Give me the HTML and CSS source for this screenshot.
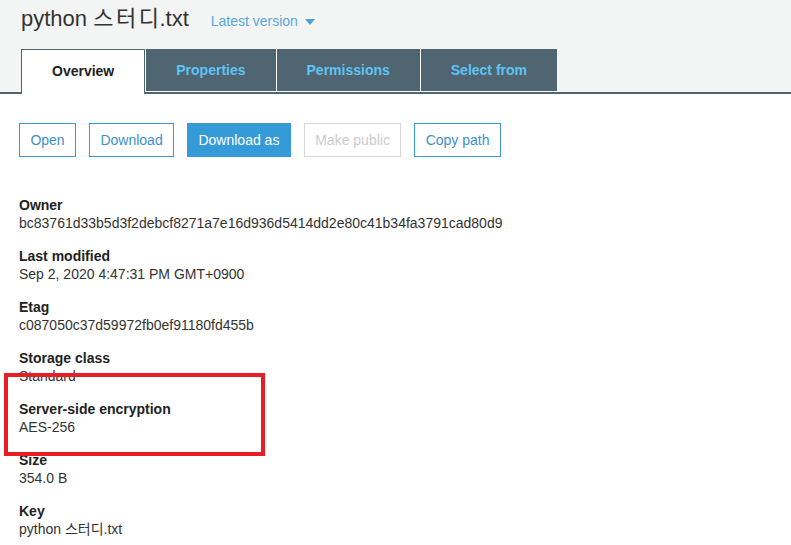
FILE: index.html
```html
<!DOCTYPE html>
<html lang="en">
<head>
<meta charset="utf-8">
<title>python 스터디.txt</title>
<link rel="stylesheet" href="styles.css">
</head>
<body>
<header class="page-head">
  <div class="title-row">
    <h1 class="file-title">python <span class="ko">스터디</span>.txt</h1>
    <a class="version" href="#">Latest version <span class="caret"></span></a>
  </div>
  <nav class="tabs">
    <a class="tab tab-active" href="#">Overview</a>
    <a class="tab" href="#">Properties</a>
    <a class="tab" href="#">Permissions</a>
    <a class="tab" href="#">Select from</a>
  </nav>
</header>
<main class="content">
  <div class="actions">
    <button class="btn">Open</button>
    <button class="btn">Download</button>
    <button class="btn btn-primary">Download as</button>
    <button class="btn btn-disabled">Make public</button>
    <button class="btn">Copy path</button>
  </div>
  <dl class="props">
    <div class="prop"><dt>Owner</dt><dd>bc83761d33b5d3f2debcf8271a7e16d936d5414dd2e80c41b34fa3791cad80d9</dd></div>
    <div class="prop"><dt>Last modified</dt><dd>Sep 2, 2020 4:47:31 PM GMT+0900</dd></div>
    <div class="prop"><dt>Etag</dt><dd>c087050c37d59972fb0ef91180fd455b</dd></div>
    <div class="prop"><dt>Storage class</dt><dd>Standard</dd></div>
    <div class="prop"><dt>Server-side encryption</dt><dd>AES-256</dd></div>
    <div class="prop"><dt>Size</dt><dd>354.0 B</dd></div>
    <div class="prop"><dt>Key</dt><dd>python 스터디.txt</dd></div>
  </dl>
</main>
<div class="highlight"></div>
</body>
</html>
```

FILE: styles.css
```css
html, body {
  margin: 0;
  padding: 0;
  background: #ffffff;
  overflow: hidden;
}

body {
  font-family: "Liberation Sans", Arial, "Noto Sans CJK KR", sans-serif;
  font-size: 14px;
  color: #333333;
  position: relative;
}

.page-head {
  background: #f3f5f4;
}

.title-row {
  display: flex;
  align-items: baseline;
  height: 49px;
  box-sizing: border-box;
  padding: 6px 0 0 21px;
}

.file-title {
  margin: 0;
  font-size: 22px;
  line-height: 26px;
  font-weight: normal;
  color: #333333;
}

.ko {
  letter-spacing: 2.5px;
  margin-right: -2px;
}

.version {
  margin-left: 22px;
  font-size: 14px;
  line-height: 18px;
  color: #5aa6df;
  text-decoration: none;
  display: inline-flex;
  align-items: center;
}

.caret {
  display: inline-block;
  width: 0;
  height: 0;
  margin-left: 7px;
  margin-top: 1px;
  border-left: 5px solid transparent;
  border-right: 5px solid transparent;
  border-top: 6px solid #4f9fd9;
}

.tabs {
  display: flex;
  align-items: flex-start;
  padding-left: 21px;
  border-bottom: 2px solid #4f6571;
}

.tab {
  display: flex;
  align-items: center;
  justify-content: center;
  box-sizing: border-box;
  height: 43px;
  padding: 0 30px;
  font-weight: bold;
  font-size: 14px;
  text-decoration: none;
  color: #5fc4f3;
  background: #4f6571;
  border-left: 1px solid #ffffff;
  border-bottom: 1px solid #ffffff;
}

.tab-active {
  height: 45px;
  margin-bottom: -2px;
  padding-bottom: 3px;
  background: #ffffff;
  color: #222222;
  border: 1px solid #4f6571;
  border-bottom: none;
  padding-left: 30px;
  padding-right: 30px;
}

.content {
  padding: 0 19px;
}

.actions {
  display: flex;
  gap: 13px;
  margin-top: 29px;
}

.btn {
  height: 34px;
  box-sizing: border-box;
  padding: 0 10.4px;
  border: 1px solid #3c98d6;
  background: #ffffff;
  color: #3d8fd0;
  font-family: "Liberation Sans", Arial, sans-serif;
  font-size: 14px;
  line-height: 32px;
  cursor: pointer;
  border-radius: 0;
}

.btn-primary {
  background: #359bd8;
  border-color: #359bd8;
  color: #ffffff;
}

.btn-disabled {
  border-color: #d6d6d6;
  color: #cccccc;
}

.props {
  margin: 39px 0 0 0;
}

.prop {
  margin-bottom: 15px;
}

.prop:last-child {
  margin-bottom: 0;
}

.prop dt {
  font-weight: bold;
  line-height: 18px;
  color: #222222;
}

.prop dd {
  margin: 0;
  line-height: 18px;
  color: #333333;
}

.highlight {
  position: absolute;
  left: 4px;
  top: 373px;
  width: 261px;
  height: 83px;
  box-sizing: border-box;
  border: 4px solid #e91e25;
  pointer-events: none;
}
```
